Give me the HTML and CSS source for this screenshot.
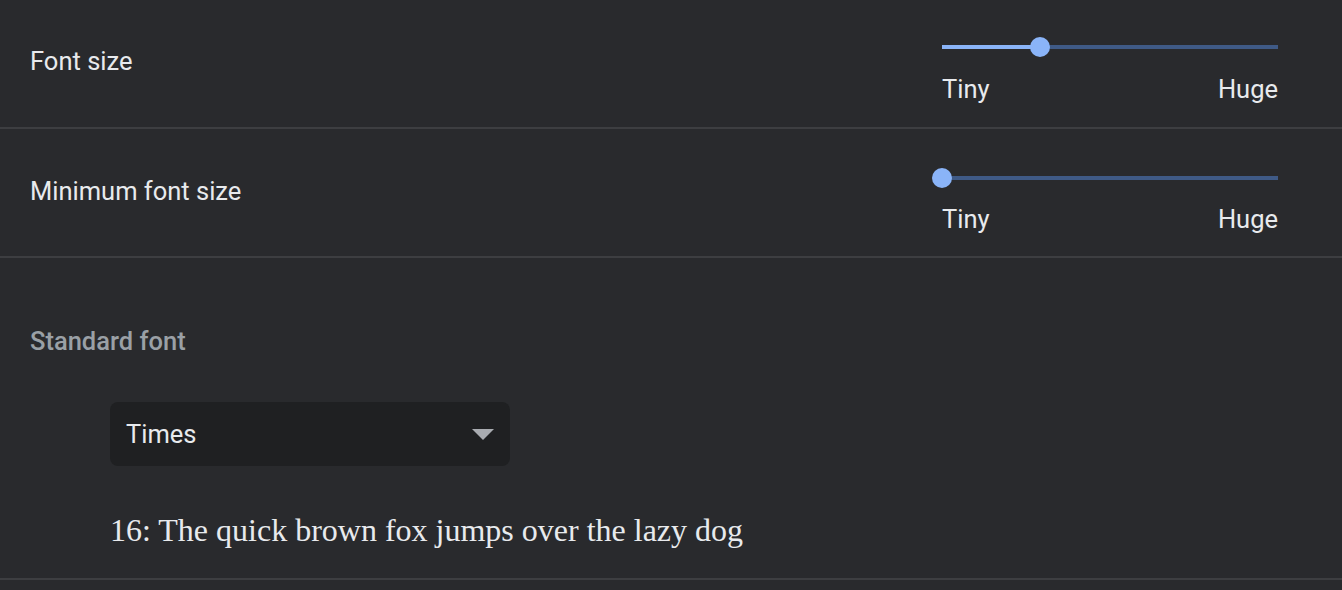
FILE: index.html
```html
<!DOCTYPE html>
<html>
<head>
<meta charset="utf-8">
<link rel="stylesheet" href="styles.css">
</head>
<body>
<div class="page">
  <div class="row row-first">
    <div class="label">Font size</div>
    <div class="slider">
      <div class="track">
        <div class="fill" style="width: 29.2%"></div>
        <div class="knob" style="left: 29.2%"></div>
      </div>
      <div class="ticks"><span>Tiny</span><span>Huge</span></div>
    </div>
  </div>
  <div class="row row-second">
    <div class="label">Minimum font size</div>
    <div class="slider">
      <div class="track">
        <div class="fill" style="width: 0%"></div>
        <div class="knob" style="left: 0%"></div>
      </div>
      <div class="ticks"><span>Tiny</span><span>Huge</span></div>
    </div>
  </div>
  <div class="section">
    <div class="section-title">Standard font</div>
    <div class="select">
      <span class="select-value">Times</span>
      <svg class="arrow" width="22" height="11" viewBox="0 0 22 11"><path d="M0 0 L22 0 L11 11 Z" fill="#a9acb1"/></svg>
    </div>
    <div class="sample">16: The quick brown fox jumps over the lazy dog</div>
  </div>
</div>
</body>
</html>
```

FILE: styles.css
```css
html, body {
  margin: 0;
  padding: 0;
  background: #292a2d;
}
body {
  font-family: Roboto, "Liberation Sans", sans-serif;
  color: #e8eaed;
  font-size: 25.5px;
}
.page {
  width: 1342px;
}
.row {
  display: flex;
  justify-content: space-between;
  align-items: flex-start;
  height: 128px;
  padding: 0 64px 0 30px;
  border-bottom: 2px solid #3d3e41;
  box-sizing: content-box;
}
.row-first {
  height: 127px;
}
.row-second {
  height: 127px;
}
.label {
  margin-top: 46px;
  line-height: 30px;
}
.slider {
  width: 336px;
  margin-top: 37px;
}
.row-second .label {
  margin-top: 47px;
}
.row-second .slider {
  margin-top: 39px;
}
.track {
  position: relative;
  height: 20px;
}
.track::before {
  content: "";
  position: absolute;
  left: 0;
  right: 0;
  top: 8px;
  height: 4px;
  background: #3f5a86;
}
.fill {
  position: absolute;
  left: 0;
  top: 8px;
  height: 4px;
  background: #8ab4f8;
}
.knob {
  position: absolute;
  top: 0;
  width: 20px;
  height: 20px;
  margin-left: -10px;
  border-radius: 50%;
  background: #8ab4f8;
}
.ticks {
  display: flex;
  justify-content: space-between;
  margin-top: 17px;
  line-height: 30px;
}
.row-second .ticks {
  margin-top: 16px;
}
.section {
  padding: 0 30px;
  height: 320px;
  border-bottom: 2px solid #3d3e41;
  display: flex;
  flex-direction: column;
  align-items: flex-start;
}
.section-title {
  margin-top: 68px;
  line-height: 30px;
  font-weight: 500;
  color: #9aa0a6;
}
.select {
  margin: 46px 0 0 80px;
  width: 400px;
  height: 64px;
  box-sizing: border-box;
  padding: 0 16px;
  background: #1f2022;
  border-radius: 8px;
  display: flex;
  align-items: center;
  justify-content: space-between;
}
.select-value {
  line-height: 30px;
}
.sample {
  margin: 46px 0 0 80px;
  font-family: "Liberation Serif", "Times New Roman", serif;
  font-size: 32px;
  line-height: 36px;
  color: #e8eaed;
}
```
